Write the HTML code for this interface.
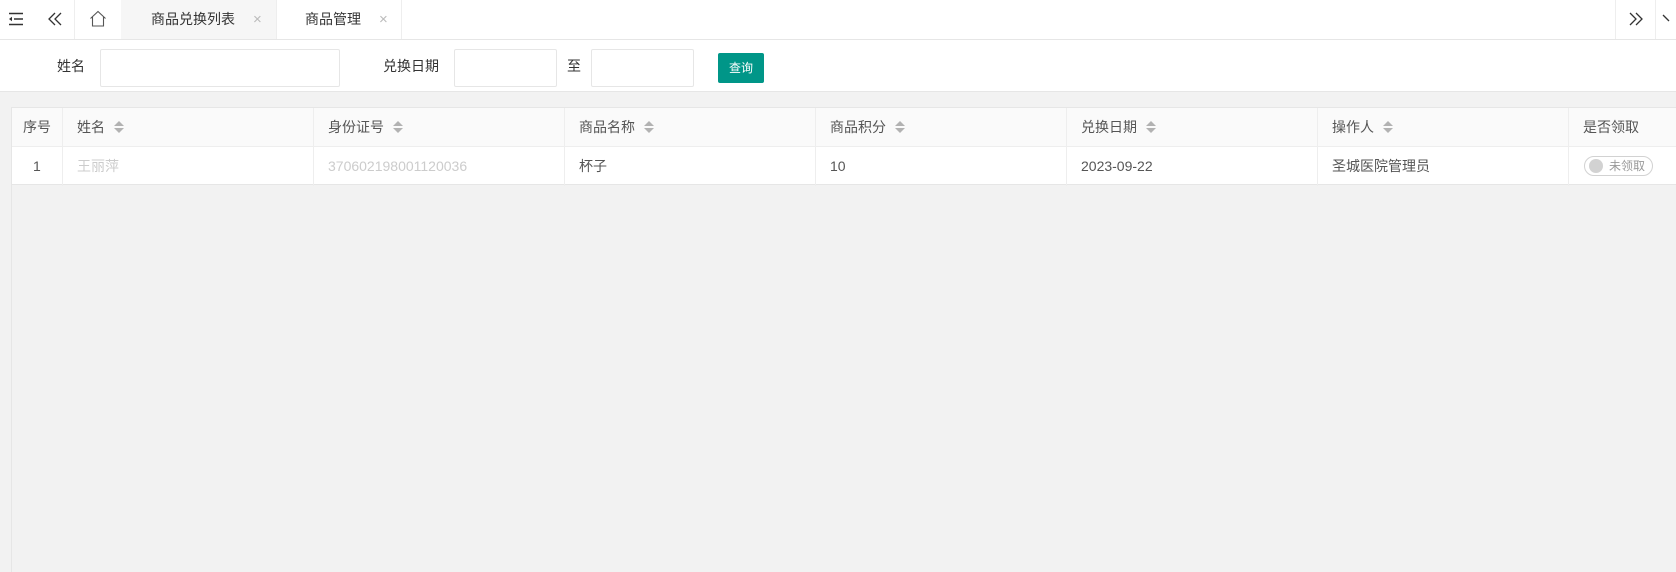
<!DOCTYPE html>
<html><head><meta charset="utf-8"><style>
*{box-sizing:border-box;margin:0;padding:0}
body{width:1676px;height:572px;overflow:hidden;background:#f2f2f2;font-family:"Liberation Sans","Noto Sans CJK SC",sans-serif;font-size:14px;color:#333;position:relative}
.abs{position:absolute}
.top{left:0;top:0;width:1676px;height:40px;background:#fff;border-bottom:1px solid #e6e6e6}
.vl{position:absolute;top:0;width:1px;height:39px;background:#eee}
.form{left:0;top:40px;width:1676px;height:52px;background:#fff;border-bottom:1px solid #e6e6e6}
.inp{position:absolute;background:#fff;border:1px solid #e6e6e6;border-radius:2px;top:9px;height:38px}
.lbl{position:absolute;top:16px;font-size:14px;color:#333}
.table{left:11px;top:107px;width:1665px;height:78px;background:#fff;border:1px solid #e6e6e6;border-right:0}
.hd{position:absolute;left:0;top:0;width:100%;height:39px;background:#fafafa;border-bottom:1px solid #eee}
.cl{position:absolute;top:0;width:1px;height:78px;background:#eee}
.tx{position:absolute;font-size:14px;color:#555;height:38px;line-height:38px;white-space:nowrap}
.r1{top:0}.r2{top:39px}
.sort{display:inline-block;vertical-align:middle;margin-left:9px;width:10px;height:12px;position:relative;top:-1px}
.sort:before{content:"";position:absolute;left:0;top:0;border:5px solid transparent;border-top:0;border-bottom:5px solid #b2b2b2}
.sort:after{content:"";position:absolute;left:0;top:7px;border:5px solid transparent;border-bottom:0;border-top:5px solid #b2b2b2}
</style></head><body>
<div class="abs top">
  <svg class="abs" style="left:8px;top:12px" width="16" height="14" viewBox="0 0 16 14"><path d="M1 1.5h14M6 7h9M1 12.5h14" stroke="#333" stroke-width="1.6"/><path d="M1 7l3-2.2v4.4z" fill="#333"/></svg>
  <svg class="abs" style="left:47px;top:12px" width="16" height="14" viewBox="0 0 16 14"><path d="M8 1L2 7l6 6M14 1L8 7l6 6" stroke="#333" stroke-width="1.3" fill="none"/></svg>
  <div class="vl" style="left:74px"></div>
  <svg class="abs" style="left:89px;top:10px" width="18" height="17" viewBox="0 0 18 17"><path d="M1.5 8.5L9 1.5l7.5 7M3.5 7v9h11V7" stroke="#555" stroke-width="1.1" fill="none"/></svg>
  <div class="abs" style="left:121px;top:0;width:155px;height:39px;background:#f6f6f6"></div>
  <div class="abs" style="left:151px;top:0;line-height:39px;font-size:14px;color:#333">商品兑换列表</div>
  <div class="abs" style="left:253px;top:0;line-height:39px;font-size:15px;color:#bbb">×</div>
  <div class="vl" style="left:276px"></div>
  <div class="abs" style="left:305px;top:0;line-height:39px;font-size:14px;color:#333">商品管理</div>
  <div class="abs" style="left:379px;top:0;line-height:39px;font-size:15px;color:#bbb">×</div>
  <div class="vl" style="left:401px"></div>
  <div class="vl" style="left:1615px"></div>
  <svg class="abs" style="left:1628px;top:12px" width="16" height="14" viewBox="0 0 16 14"><path d="M2 1l6 6-6 6M8 1l6 6-6 6" stroke="#333" stroke-width="1.3" fill="none"/></svg>
  <div class="vl" style="left:1655px"></div>
  <svg class="abs" style="left:1662px;top:14px" width="14" height="10" viewBox="0 0 14 10"><path d="M1 1l6 6" stroke="#333" stroke-width="1.3" fill="none"/></svg>
</div>
<div class="abs form">
  <div class="lbl" style="left:57px">姓名</div>
  <div class="inp" style="left:100px;width:240px"></div>
  <div class="lbl" style="left:383px">兑换日期</div>
  <div class="inp" style="left:454px;width:103px"></div>
  <div class="lbl" style="left:567px">至</div>
  <div class="inp" style="left:591px;width:103px"></div>
  <div class="abs" style="left:718px;top:13px;width:46px;height:30px;background:#009688;border-radius:2px;color:#fff;font-size:12px;line-height:30px;text-align:center">查询</div>
</div>
<div class="abs" style="left:11px;top:185px;width:1px;height:387px;background:#e6e6e6"></div>
<div class="abs table">
  <div class="hd"></div>
  <div class="cl" style="left:50px"></div>
  <div class="cl" style="left:301px"></div>
  <div class="cl" style="left:552px"></div>
  <div class="cl" style="left:803px"></div>
  <div class="cl" style="left:1054px"></div>
  <div class="cl" style="left:1305px"></div>
  <div class="cl" style="left:1556px"></div>
  <div class="tx r1" style="left:11px">序号</div>
  <div class="tx r1" style="left:65px">姓名<span class="sort"></span></div>
  <div class="tx r1" style="left:316px">身份证号<span class="sort"></span></div>
  <div class="tx r1" style="left:567px">商品名称<span class="sort"></span></div>
  <div class="tx r1" style="left:818px">商品积分<span class="sort"></span></div>
  <div class="tx r1" style="left:1069px">兑换日期<span class="sort"></span></div>
  <div class="tx r1" style="left:1320px">操作人<span class="sort"></span></div>
  <div class="tx r1" style="left:1571px">是否领取</div>
  <div class="tx r2" style="left:21px">1</div>
  <div class="tx r2" style="left:65px;color:#ccc">王丽萍</div>
  <div class="tx r2" style="left:316px;color:#ccc">370602198001120036</div>
  <div class="tx r2" style="left:567px">杯子</div>
  <div class="tx r2" style="left:818px">10</div>
  <div class="tx r2" style="left:1069px">2023-09-22</div>
  <div class="tx r2" style="left:1320px">圣城医院管理员</div>
  <div class="abs" style="left:1572px;top:48px;width:69px;height:20px;border:1px solid #d2d2d2;border-radius:10px">
    <div class="abs" style="left:4px;top:2px;width:14px;height:14px;border-radius:50%;background:#d2d2d2"></div>
    <div class="abs" style="left:24px;top:0;line-height:18px;font-size:12px;color:#999">未领取</div>
  </div>
</div>
</body></html>
